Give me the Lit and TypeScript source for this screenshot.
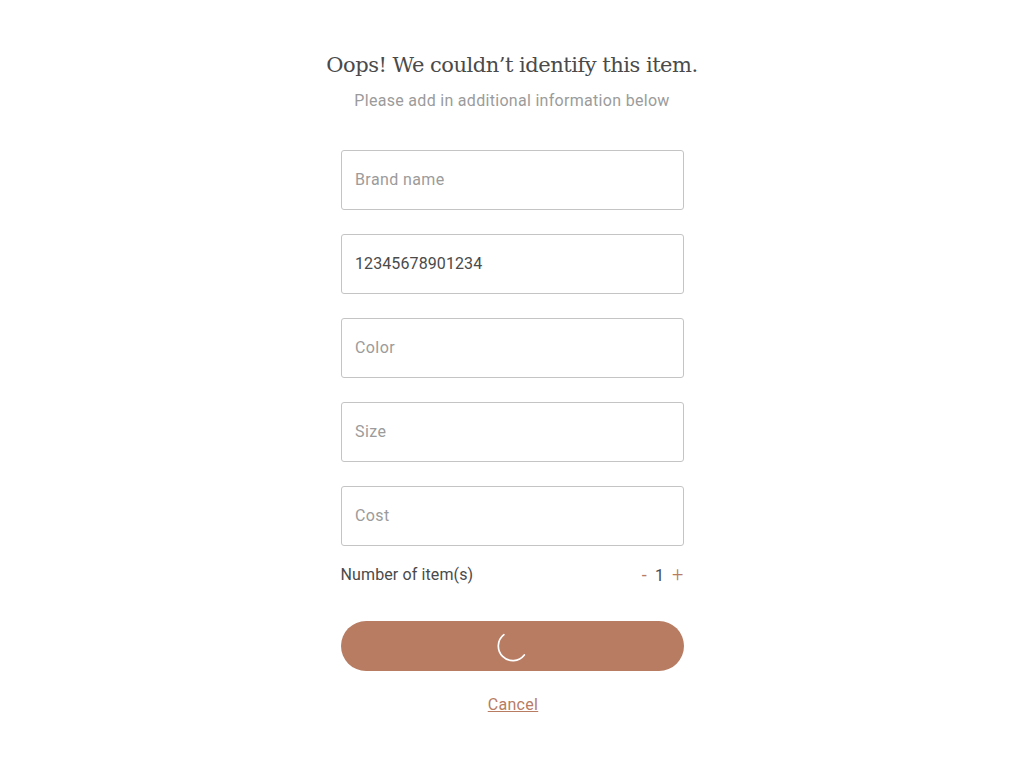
import { LitElement, html, css } from "lit";
import { customElement } from "lit/decorators.js";

@customElement("app-root")
export class AppRoot extends LitElement {
  static styles = css`
    :host { display: block; width: 1024px; height: 768px; background: #fff; font-family: "Roboto", "Liberation Sans", sans-serif; }
    .page { display: flex; flex-direction: column; align-items: center; padding-top: 50px; box-sizing: border-box; }
    h1 { margin: 0; font: 400 21px/30px "DejaVu Serif", "Liberation Serif", serif; color: #4a4a4a; letter-spacing: -0.49px; }
    .sub { margin: 10px 0 0; font-size: 16px; line-height: 22px; color: #9b9b9b; letter-spacing: 0.3px; }
    .form { width: 343px; margin-top: 38px; display: flex; flex-direction: column; gap: 24px; }
    .field { height: 60px; box-sizing: border-box; border: 1px solid #c4c4c4; border-radius: 3px; padding: 0 13px 2px 13.5px; display: flex; align-items: center; font-size: 16px; color: #9b9b9b; letter-spacing: 0.4px; }
    .field.filled { color: #4a4a4a; letter-spacing: 0.1px; }
    .qty { display: flex; justify-content: space-between; align-items: center; height: 20px; margin-top: 18px; width: 343px; font-size: 16px; color: #4a4a4a; letter-spacing: 0.12px; }
    .stepper { display: flex; align-items: baseline; gap: 8px; }
    .accent { color: #b87c63; font-weight: 300; }
    .minus { font-size: 18px; font-weight: 400; }
    .plus { font-size: 20px; }
    .btn { width: 343px; height: 50px; border-radius: 25px; background: #b87c63; margin-top: 37px; display: flex; align-items: center; justify-content: center; }
    .spinner { margin-left: 1px; }
    .cancel { margin-top: 24px; margin-left: 2px; font-size: 16px; color: #b87c63; text-decoration: underline; letter-spacing: 0.3px; }
  `;
  render() {
    const fields: [string, boolean][] = [["Brand name", false], ["12345678901234", true], ["Color", false], ["Size", false], ["Cost", false]];
    return html`<div class="page">
      <h1>Oops! We couldn’t identify this item.</h1>
      <p class="sub">Please add in additional information below</p>
      <div class="form">
        ${fields.map(([t, f]) => html`<div class="field ${f ? "filled" : ""}">${t}</div>`)}
      </div>
      <div class="qty"><span>Number of item(s)</span><span class="stepper"><span class="accent minus">-</span><span>1</span><span class="accent plus">+</span></span></div>
      <div class="btn"><svg class="spinner" width="32" height="32" viewBox="0 0 32 32" fill="none"><path d="M6.9 4.7A14.5 14.5 0 1 0 27.3 25" stroke="#fff" stroke-width="1.7" stroke-linecap="round"/></svg></div>
      <a class="cancel">Cancel</a>
    </div>`;
  }
}
